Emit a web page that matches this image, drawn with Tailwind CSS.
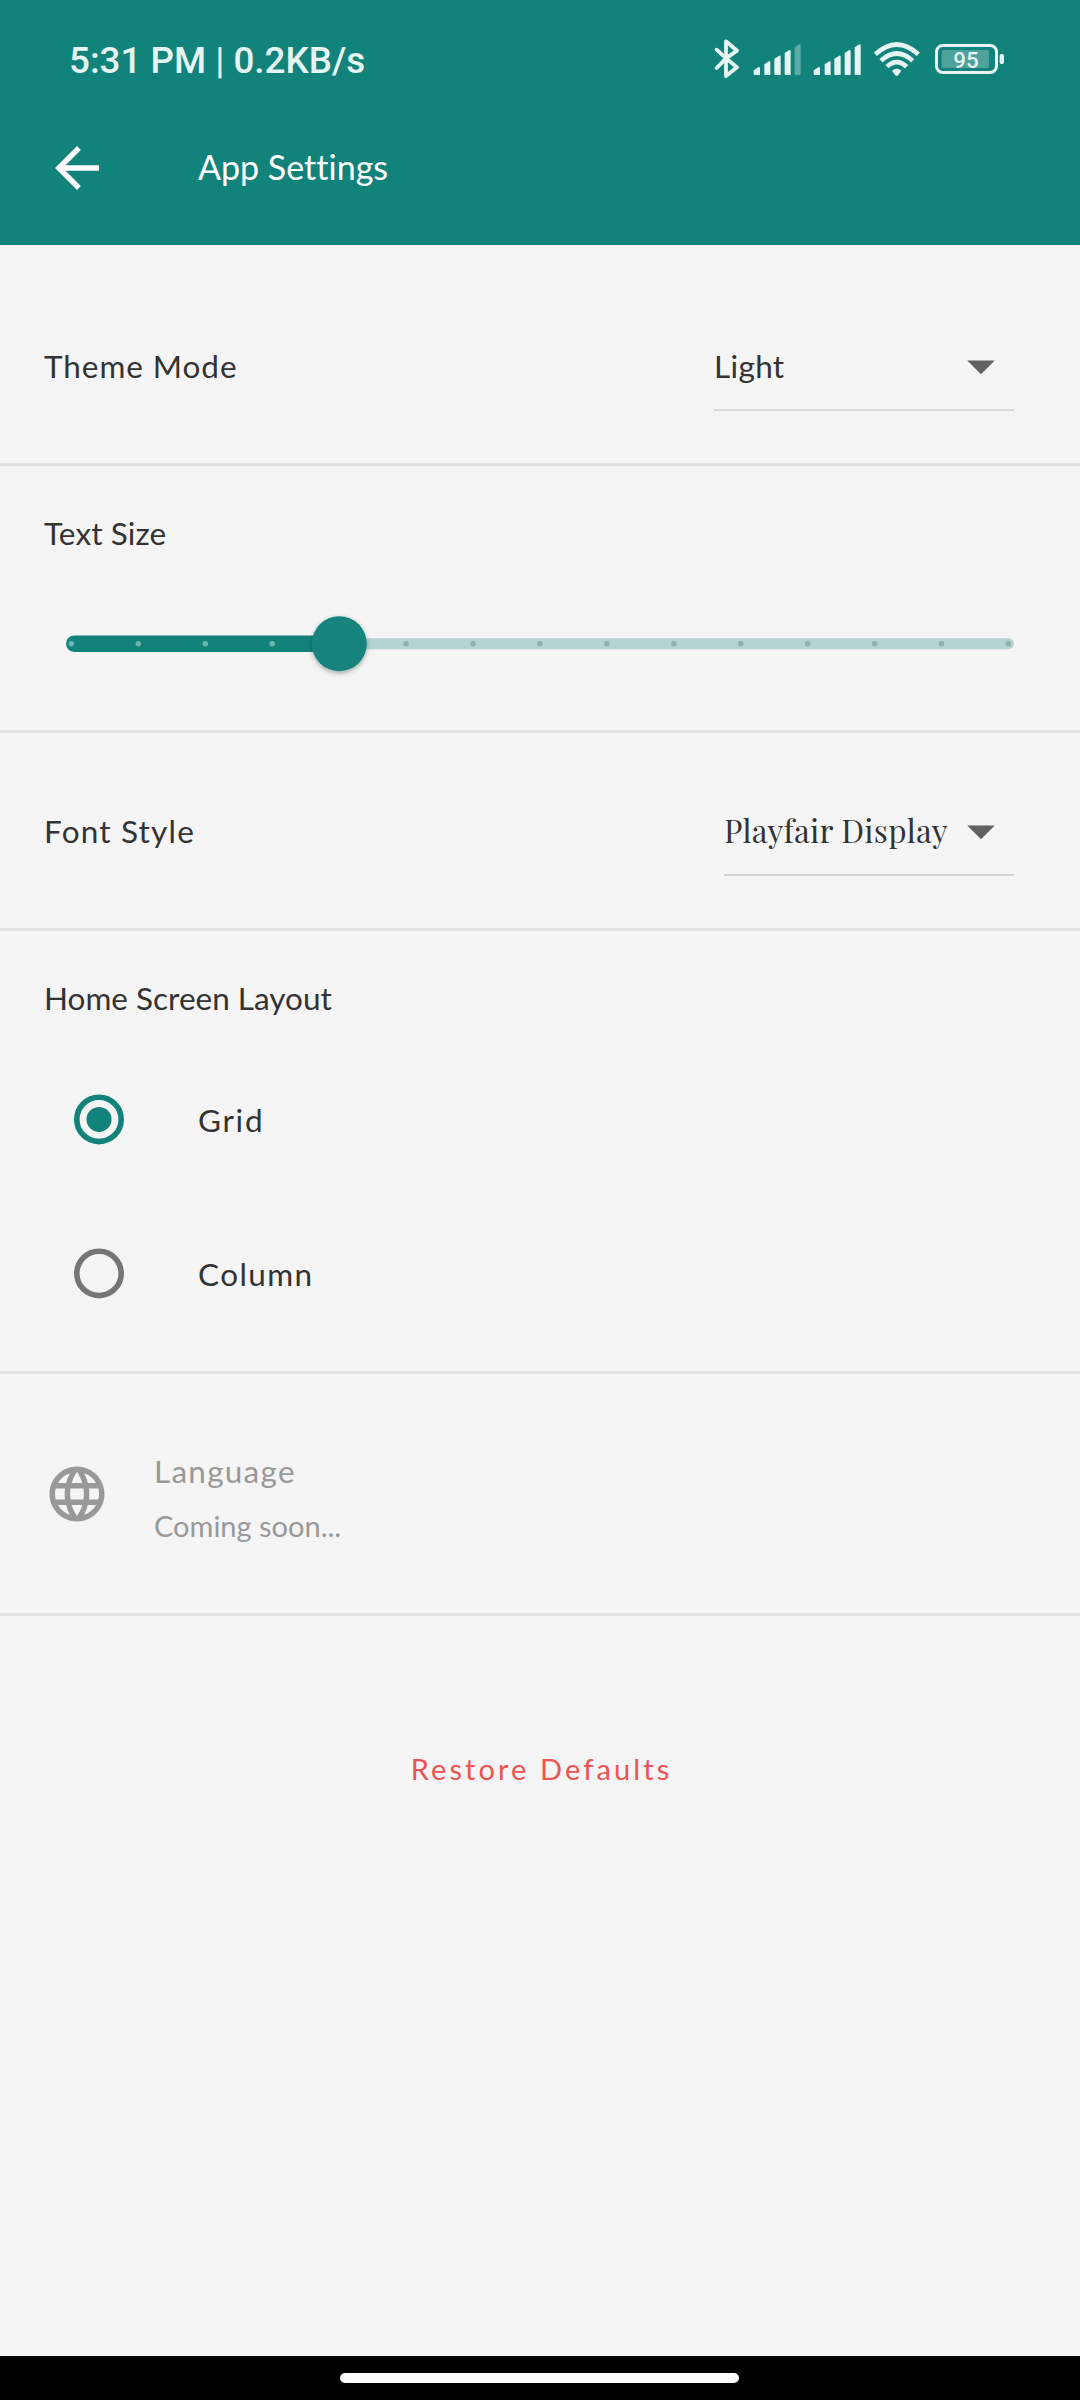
<!DOCTYPE html>
<html lang="en">
<head>
<meta charset="utf-8">
<title>App Settings</title>
<script src="https://cdn.jsdelivr.net/npm/@tailwindcss/browser@4"></script>
</head>
<body class="bg-[#f5f5f5]">
<div class="flex h-[2400px] w-[1080px] flex-col overflow-hidden bg-[#f5f5f5] font-['Lato',sans-serif] text-[31.5px] leading-10 whitespace-nowrap text-[#333333]">

  <header class="h-[245px] shrink-0 bg-[#12837b]">
    <!-- Status bar -->
    <div class="flex h-[91px] items-end justify-between pr-[60px] pl-[69px] text-[#e6f5f4]">
      <div class="mb-2.5 font-['Roboto',sans-serif] text-[36.75px] font-medium">5:31 PM | 0.2KB/s</div>
      <div class="flex h-[71px]">
        <svg class="h-[71px] w-[50px]" viewBox="0 0 150 213" fill="none" stroke="currentColor" stroke-width="11.500" stroke-linejoin="round" stroke-linecap="round"><path d="M50 89 L78 115 L111 142 L78 168 V64 L111 92 L78 115 L50 144"/></svg>
        <svg class="h-[71px] w-[60px]" viewBox="150 0 180 213" fill="currentColor"><path d="M161 151 L176 141 Q180 140 180 144 V165 H164 Q161 165 161 162 Z M193 133 L207 124 Q211 123 211 127 V165 H196 Q193 165 193 162 Z M223 116 L238 107 Q242 106 242 110 V165 H226 Q223 165 223 162 Z M254 99 L268 90 Q272 89 272 93 V165 H257 Q254 165 254 162 Z"/><path opacity=".35" d="M284 82 L298 73 Q302 72 302 76 V165 H287 Q284 165 284 162 Z"/></svg>
        <svg class="h-[71px] w-[60px]" viewBox="330 0 180 213" fill="currentColor"><path d="M341 151 L356 141 Q360 140 360 144 V165 H344 Q341 165 341 162 Z M374 133 L388 124 Q392 123 392 127 V165 H377 Q374 165 374 162 Z M403 116 L418 107 Q422 106 422 110 V165 H406 Q403 165 403 162 Z M434 99 L448 90 Q452 89 452 93 V165 H437 Q434 165 434 162 Z M464 82 L478 73 Q482 72 482 76 V165 H467 Q464 165 464 162 Z"/></svg>
        <svg class="h-[71px] w-[60px]" viewBox="510 0 180 213" fill="none" stroke="currentColor" stroke-width="14"><path d="M526 103 Q590 44 655 103"/><path d="M543 122 Q590 79 638 122"/><path d="M561 140 Q590 113 620 140"/><path fill="currentColor" stroke="none" d="M576 152 Q590 141 604 152 L594 166 Q590 170 586 166 Z"/></svg>
        <svg class="h-[71px] w-[90px]" viewBox="690 0 270 213"><rect x="709.500" y="76.500" width="180" height="81" rx="19" fill="none" stroke="currentColor" stroke-width="9"/><rect x="725" y="90" width="142" height="54" rx="5" fill="currentColor" opacity=".28"/><rect x="899" y="102" width="13" height="30" rx="5" fill="currentColor"/><text x="798" y="143" text-anchor="middle" fill="currentColor" font-family="Roboto, sans-serif" font-weight="500" font-size="67">95</text></svg>
      </div>
    </div>
    <!-- App bar -->
    <div class="flex h-[154px] items-center pl-11">
      <svg class="size-[66px]" viewBox="0 0 24 24" fill="#fff"><path d="M20 11H7.830l5.590-5.590L12 4l-8 8 8 8 1.410-1.410L7.830 13H20v-2z"/></svg>
      <h1 class="ml-[88px] pb-0.5 text-[34px] tracking-[0.02px] text-white">App Settings</h1>
    </div>
  </header>

  <!-- Theme mode -->
  <section class="flex h-[221px] shrink-0 items-start justify-between border-b-3 border-[#e1e1e1] pt-[88px] pr-[66px] pl-11">
    <span class="mt-[13px] tracking-[0.95px]">Theme Mode</span>
    <div class="h-[78px] w-[300px] border-b-2 border-[#d8d8d8]">
      <div class="flex h-[66px] items-center justify-between">
        <span class="tracking-[0.35px]">Light</span>
        <svg class="size-[66px]" viewBox="0 0 24 24" fill="#616161"><path d="M7 10l5 5 5-5z"/></svg>
      </div>
    </div>
  </section>

  <!-- Text size -->
  <section class="h-[267px] shrink-0 border-b-3 border-[#e1e1e1] pt-[47px]">
    <div class="pl-11 tracking-[0.1px]">Text Size</div>
    <svg class="mt-[50px] block h-20 w-full" viewBox="0 603 1080 80">
      <defs><filter id="thumb-shadow" x="-30%" y="-30%" width="160%" height="170%"><feDropShadow dx="0" dy="2" stdDeviation="2.500" flood-color="#000" flood-opacity=".32"/></filter></defs>
      <rect x="300" y="638.200" width="714" height="11" rx="5.500" fill="#b4d4d1"/>
      <rect x="66" y="635.400" width="290" height="16.500" rx="8.250" fill="#12837b"/>
      <g fill="#6fb3ae"><circle cx="71.400" cy="643.700" r="2.750"/><circle cx="138.300" cy="643.700" r="2.750"/><circle cx="205.300" cy="643.700" r="2.750"/><circle cx="272.200" cy="643.700" r="2.750"/></g>
      <g fill="#93aeac"><circle cx="406.100" cy="643.700" r="2.750"/><circle cx="473" cy="643.700" r="2.750"/><circle cx="539.900" cy="643.700" r="2.750"/><circle cx="606.800" cy="643.700" r="2.750"/><circle cx="673.800" cy="643.700" r="2.750"/><circle cx="740.700" cy="643.700" r="2.750"/><circle cx="807.600" cy="643.700" r="2.750"/><circle cx="874.600" cy="643.700" r="2.750"/><circle cx="941.500" cy="643.700" r="2.750"/><circle cx="1008.400" cy="643.700" r="2.750"/></g>
      <circle cx="339.300" cy="643.700" r="27.500" fill="#12837b" filter="url(#thumb-shadow)"/>
    </svg>
  </section>

  <!-- Font style -->
  <section class="flex h-[198px] shrink-0 items-start justify-between border-b-3 border-[#e1e1e1] pt-[65px] pr-[66px] pl-11">
    <span class="mt-[13px] tracking-[1.2px]">Font Style</span>
    <div class="h-[78px] w-[290px] border-b-2 border-[#d2d2d2]">
      <div class="flex h-[66px] items-center justify-between">
        <span class="pb-0.5 font-['Playfair_Display',serif] tracking-[0.27px]">Playfair Display</span>
        <svg class="size-[66px]" viewBox="0 0 24 24" fill="#616161"><path d="M7 10l5 5 5-5z"/></svg>
      </div>
    </div>
  </section>

  <!-- Home screen layout -->
  <section class="h-[443px] shrink-0 border-b-3 border-[#e1e1e1] pt-[47px]">
    <div class="pl-11">Home Screen Layout</div>
    <div class="mt-[25px] flex h-[154px] items-center gap-[66px] pl-[66px]">
      <svg class="size-[66px]" viewBox="0 0 66 66"><circle cx="33" cy="32.400" r="22.200" fill="none" stroke="#12837b" stroke-width="5.600"/><circle cx="33" cy="32.400" r="12.500" fill="#12837b"/></svg>
      <span class="tracking-[1.7px]">Grid</span>
    </div>
    <div class="flex h-[154px] items-center gap-[66px] pl-[66px]">
      <svg class="size-[66px]" viewBox="0 0 66 66"><circle cx="33" cy="32.400" r="22.200" fill="none" stroke="#757575" stroke-width="5.600"/></svg>
      <span class="tracking-[1.4px]">Column</span>
    </div>
  </section>

  <!-- Language -->
  <section class="flex h-[242px] shrink-0 items-start gap-11 border-b-3 border-[#e1e1e1] pl-11 text-[#999999]">
    <svg class="mt-[87px] size-[66px]" viewBox="0 0 24 24" fill="currentColor"><path d="M11.990 2C6.470 2 2 6.480 2 12s4.470 10 9.990 10C17.520 22 22 17.520 22 12S17.520 2 11.990 2zm6.930 6h-2.950c-.32-1.250-.78-2.450-1.380-3.560 1.840.63 3.370 1.910 4.330 3.560zM12 4.040c.83 1.200 1.480 2.530 1.910 3.960h-3.820c.43-1.430 1.080-2.760 1.910-3.960zM4.260 14C4.100 13.360 4 12.690 4 12s.1-1.360.26-2h3.380c-.08.66-.14 1.320-.14 2s.06 1.340.14 2H4.260zm.82 2h2.950c.32 1.250.78 2.450 1.380 3.560-1.840-.63-3.370-1.900-4.330-3.560zm2.950-8H5.080c.96-1.660 2.490-2.930 4.330-3.560C8.810 5.550 8.350 6.750 8.030 8zM12 19.960c-.83-1.200-1.480-2.530-1.910-3.960h3.820c-.43 1.430-1.080 2.760-1.910 3.960zM14.340 14H9.660c-.09-.66-.16-1.320-.16-2s.07-1.350.16-2h4.680c.09.65.16 1.320.16 2s-.07 1.340-.16 2zm.25 5.560c.6-1.110 1.060-2.310 1.380-3.560h2.950c-.96 1.650-2.490 2.930-4.330 3.560zM16.360 14c.08-.66.14-1.320.14-2s-.06-1.340-.14-2h3.380c.16.640.26 1.310.26 2s-.1 1.360-.26 2h-3.380z"/></svg>
    <div class="flex flex-col gap-[15px] pt-[77px]">
      <div class="tracking-[1.25px]">Language</div>
      <div class="text-[29px]">Coming soon...</div>
    </div>
  </section>

  <div class="mt-[133px] pl-[3px] text-center text-[29px] tracking-[3.1px] text-[#ef5350]">Restore Defaults</div>

  <!-- Gesture bar -->
  <footer class="mt-auto flex h-11 shrink-0 bg-black pt-[17px] pl-[340px]">
    <div class="h-2.5 w-[399px] rounded-full bg-white"></div>
  </footer>
</div>
</body>
</html>
